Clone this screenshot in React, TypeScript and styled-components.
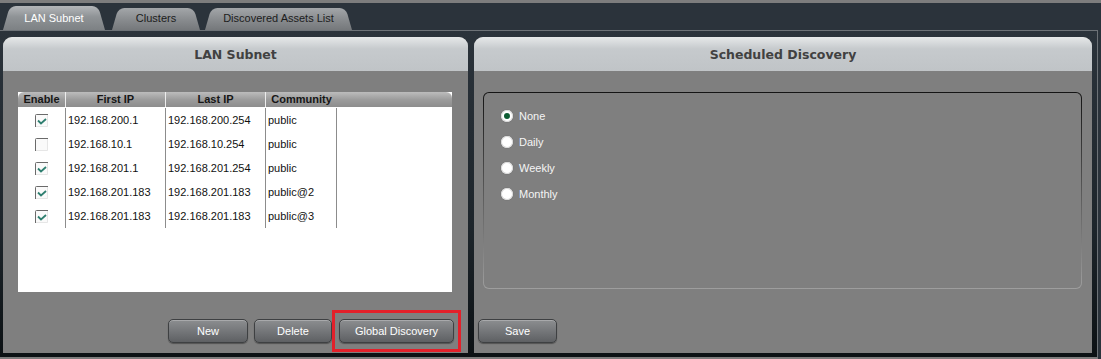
import React from "react";
import styled, {createGlobalStyle} from "styled-components";

const GlobalStyle = createGlobalStyle`
  body {
    margin: 0;
    background: #2b333b;
    font-family: "Liberation Sans", Arial, sans-serif;
    overflow: hidden;
  }
`

const Screen = styled.div`
  width: 1101px;
  height: 359px;
  display: flex;
  flex-direction: column;
  background: #2b333b;
  overflow: hidden;
`

const TopStrip = styled.div`
  height: 3px;
  background: #7d7d7d;
`

const TabBar = styled.div`
  height: 27px;
  display: flex;
  align-items: flex-end;
  padding-left: 3px;
`

interface TabProps {
    $w: number;
    $active?: boolean;
    $gap?: number;
}

const Tab = styled.div<TabProps>`
  position: relative;
  isolation: isolate;
  width: ${p => p.$w}px;
  height: ${p => p.$active ? 24 : 22}px;
  margin-right: ${p => p.$gap ?? 0}px;
  display: flex;
  align-items: center;
  justify-content: center;
  padding-bottom: ${p => p.$active ? 1 : 3}px;
  box-sizing: border-box;
  font-size: 11px;
  color: ${p => p.$active ? "#ffffff" : "#1c1c1c"};

  &::before, &::after {
    content: "";
    position: absolute;
    top: 0;
    bottom: 0;
    width: 56%;
    z-index: -1;
    transform-origin: bottom;
    background: ${p => p.$active
            ? "linear-gradient(#b3b6b9, #8f9396 45%, #7d8184)"
            : "linear-gradient(#a3a6a9, #8a8d90 50%, #75787b)"};
  }
  &::before {
    left: 0;
    border-radius: 6px 0 0 0;
    transform: skewX(-16deg);
  }
  &::after {
    right: 0;
    border-radius: 0 6px 0 0;
    transform: skewX(16deg);
  }
`

const Frame = styled.div`
  flex: 1;
  margin-right: 3px;
  border-top: 1px solid #6d7277;
  border-right: 1px solid #6d7277;
  border-bottom: 2px solid #7d7d7d;
  background: linear-gradient(#2b333b, #1d252b 60%, #0c1114);
  display: flex;
  gap: 6px;
  padding: 6px 5px 4px 3px;
`

const Panel = styled.div<{ $w: number }>`
  width: ${p => p.$w}px;
  display: flex;
  flex-direction: column;
  background: #7f7f7f;
  border-radius: 9px 9px 0 0;
  overflow: hidden;
`

const PanelHeader = styled.div`
  height: 34px;
  display: flex;
  align-items: center;
  justify-content: center;
  background: linear-gradient(#e6e8e9, #c6cacd 35%, #c0c4c7);
  font-family: "DejaVu Sans", Verdana, sans-serif;
  font-weight: bold;
  font-size: 12.5px;
  color: #414141;
`

const PanelBody = styled.div<{ $pl: number; $pr: number }>`
  flex: 1;
  display: flex;
  flex-direction: column;
  padding: 21px ${p => p.$pr}px 10px ${p => p.$pl}px;
`

const Grid = styled.div`
  width: 434px;
  height: 200px;
  background: #ffffff;
  display: flex;
  flex-direction: column;
`

const GridHead = styled.div`
  height: 15px;
  display: flex;
  background: linear-gradient(#bcbcbc, #9c9c9c 50%, #8d8d8d);
  border-radius: 6px 6px 0 0;
`

const HeadCell = styled.div<{ $w: number; $last?: boolean }>`
  width: ${p => p.$w}px;
  box-sizing: border-box;
  border-right: ${p => p.$last ? "none" : "1px solid #ececec"};
  text-align: center;
  font-weight: bold;
  font-size: 11px;
  line-height: 15px;
  color: #161616;
`

const GridRows = styled.div`
  padding-top: 1px;
`

const GridRow = styled.div`
  display: flex;
  height: 24px;
`

const Cell = styled.div<{ $w: number; $center?: boolean }>`
  width: ${p => p.$w}px;
  box-sizing: border-box;
  border-right: 1px solid #8c8c8c;
  padding-left: ${p => p.$center ? 0 : 2}px;
  display: flex;
  align-items: center;
  justify-content: ${p => p.$center ? "center" : "flex-start"};
  font-size: 11px;
  color: #111111;
`

const ButtonRow = styled.div<{ $align: string }>`
  margin-top: auto;
  display: flex;
  justify-content: ${p => p.$align};
  gap: 6px;
`

const Button = styled.button<{ $w: number; $marked?: boolean }>`
  position: relative;
  width: ${p => p.$w}px;
  height: 24px;
  border: 1px solid #3e4042;
  border-radius: 5px;
  background: linear-gradient(#8c8e90, #75777a 50%, #5e6063);
  box-shadow: inset 0 1px 0 rgba(255, 255, 255, 0.25), 0 1px 1px rgba(0, 0, 0, 0.35);
  color: #ffffff;
  font-family: "Liberation Sans", Arial, sans-serif;
  font-size: 11px;
  padding: 0;
  margin-left: ${p => p.$marked ? 1 : 0}px;

  &::after {
    content: "";
    display: ${p => p.$marked ? "block" : "none"};
    position: absolute;
    top: -10px;
    bottom: -10px;
    left: -8px;
    right: -8px;
    border: 3px solid #e3202a;
  }
`

const FieldsetFrame = styled.div`
  margin-left: 5px;
  height: 195px;
  padding: 1px;
  border-radius: 6px;
  background: linear-gradient(#141414, #4a4a4a 40%, #9e9e9e);
`

const Fieldset = styled.div`
  height: 100%;
  box-sizing: border-box;
  border-radius: 5px;
  background: #7f7f7f;
  padding: 10px 0 0 17px;
  display: flex;
  flex-direction: column;
`

const RadioRow = styled.label`
  height: 26px;
  display: flex;
  align-items: center;
  gap: 6px;
  font-size: 11px;
  color: #f5f5f5;
`

const RadioDot = styled.span<{ $on?: boolean }>`
  width: 12px;
  height: 12px;
  border-radius: 50%;
  background: #ffffff;
  box-shadow: inset 0 0 0 1px #d8d8d8, 0 0 1px rgba(0, 0, 0, 0.4);
  display: flex;
  align-items: center;
  justify-content: center;

  &::after {
    content: "";
    display: ${p => p.$on ? "block" : "none"};
    width: 6px;
    height: 6px;
    border-radius: 50%;
    background: #0d5c33;
  }
`

function Check({on}: { on: boolean }) {
    return (
        <svg width="13" height="13" viewBox="0 0 13 13">
            <rect x="0" y="0" width="13" height="13" fill="#fafafa"/>
            <path d="M0.5 13 V1.5 Q0.5 0.5 1.5 0.5 H13" fill="none" stroke="#6a6a6a"/>
            <path d="M12.5 1 V12.5 H1" fill="none" stroke="#e6e6e6"/>
            {on && <polyline points="3,6.5 6,9.5 11,5" fill="none" stroke="#2f7f70" strokeWidth="1.8"/>}
        </svg>
    )
}

const subnets = [
    {on: true, first: "192.168.200.1", last: "192.168.200.254", community: "public"},
    {on: false, first: "192.168.10.1", last: "192.168.10.254", community: "public"},
    {on: true, first: "192.168.201.1", last: "192.168.201.254", community: "public"},
    {on: true, first: "192.168.201.183", last: "192.168.201.183", community: "public@2"},
    {on: true, first: "192.168.201.183", last: "192.168.201.183", community: "public@3"},
]

const schedules = ["None", "Daily", "Weekly", "Monthly"]

export default function App() {
    return (
        <Screen>
            <GlobalStyle/>
            <TopStrip/>
            <TabBar>
                <Tab $w={102} $active $gap={7}>LAN Subnet</Tab>
                <Tab $w={88} $gap={5}>Clusters</Tab>
                <Tab $w={147}>Discovered Assets List</Tab>
            </TabBar>
            <Frame>
                <Panel $w={465}>
                    <PanelHeader>LAN Subnet</PanelHeader>
                    <PanelBody $pl={15} $pr={14}>
                        <Grid>
                            <GridHead>
                                <HeadCell $w={48}>Enable</HeadCell>
                                <HeadCell $w={100}>First IP</HeadCell>
                                <HeadCell $w={100}>Last IP</HeadCell>
                                <HeadCell $w={71} $last>Community</HeadCell>
                            </GridHead>
                            <GridRows>
                                {subnets.map((s, i) => (
                                    <GridRow key={i}>
                                        <Cell $w={48} $center><Check on={s.on}/></Cell>
                                        <Cell $w={100}>{s.first}</Cell>
                                        <Cell $w={100}>{s.last}</Cell>
                                        <Cell $w={71}>{s.community}</Cell>
                                    </GridRow>
                                ))}
                            </GridRows>
                        </Grid>
                        <ButtonRow $align="flex-end">
                            <Button $w={80}>New</Button>
                            <Button $w={78}>Delete</Button>
                            <Button $w={115} $marked>Global Discovery</Button>
                        </ButtonRow>
                    </PanelBody>
                </Panel>
                <Panel $w={618}>
                    <PanelHeader>Scheduled Discovery</PanelHeader>
                    <PanelBody $pl={4} $pr={10}>
                        <FieldsetFrame>
                            <Fieldset>
                                {schedules.map((s, i) => (
                                    <RadioRow key={s}>
                                        <RadioDot $on={i === 0}/>
                                        {s}
                                    </RadioRow>
                                ))}
                            </Fieldset>
                        </FieldsetFrame>
                        <ButtonRow $align="flex-start">
                            <Button $w={79}>Save</Button>
                        </ButtonRow>
                    </PanelBody>
                </Panel>
            </Frame>
        </Screen>
    )
}
